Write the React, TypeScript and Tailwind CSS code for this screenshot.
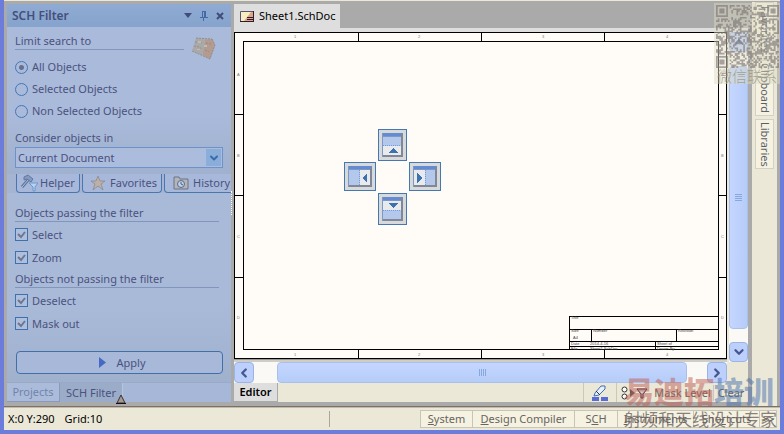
import { useState } from 'react'
import type { ReactNode } from 'react'
import { ChevronDown, ChevronLeft, ChevronRight, ChevronUp } from 'lucide-react'

const FONT = "font-['Noto_Sans','Noto_Sans_CJK_SC',sans-serif]"

function Heading({ children, className = '' }: { children: ReactNode; className?: string }) {
  return <h3 className={`border-b border-[#8296bd] text-[11px] leading-4 ${className}`}>{children}</h3>
}

function Radio({ label, checked, onChange }: { label: string; checked: boolean; onChange: () => void }) {
  return (
    <label className="flex h-[22px] items-center gap-1 text-[11px] leading-4">
      <input
        type="radio"
        name="limit"
        checked={checked}
        onChange={onChange}
        className="size-[13px] shrink-0 appearance-none rounded-full border border-[#4677b3] bg-[#a9badb] checked:bg-[radial-gradient(circle,#66708e_0_2px,#a9badb_3px)]"
      />
      {label}
    </label>
  )
}

function Check({ label }: { label: string }) {
  const [on, setOn] = useState(true)
  return (
    <label className="flex h-[23px] items-center gap-1 text-[11px] leading-4">
      <span className="relative flex size-[13px] shrink-0">
        <input
          type="checkbox"
          checked={on}
          onChange={() => setOn(!on)}
          className="size-full appearance-none border border-[#3f70ac] bg-[#aebfde]"
        />
        {on && (
          <svg viewBox="0 0 13 13" className="pointer-events-none absolute inset-0 size-full">
            <path d="M3 6l3 3 4-5" fill="none" stroke="#6d7690" strokeWidth="2" />
          </svg>
        )}
      </span>
      {label}
    </label>
  )
}

function HelperIcon() {
  return (
    <svg viewBox="0 0 18 18" className="size-[18px]">
      <path d="M2 13l7-8" stroke="#5c7199" strokeWidth="3" />
      <path d="M2 13l7-8" stroke="#b2c8e6" strokeWidth="1" />
      <path d="M4 3l4-2 5 4-2 3-4-3-3 1z" fill="#8299c0" stroke="#6478a0" />
      <path d="M9 9h9l-3 4v4h-2v-4z" fill="#b4d2f2" stroke="#6d97cb" />
    </svg>
  )
}

function StarIcon() {
  return (
    <svg viewBox="0 0 16 16" className="size-4">
      <path d="M8 1l2 5h5l-4 3 2 6-5-4-5 4 2-6-4-3h5z" fill="#bdb0a6" stroke="#8d8a92" strokeWidth=".8" />
    </svg>
  )
}

function HistoryIcon() {
  return (
    <svg viewBox="0 0 16 14" className="h-3.5 w-4">
      <path d="M1 3V1h5l1 2h8v10H1z" fill="#b3b5b6" stroke="#6a7488" />
      <circle cx="8" cy="8" r="3.500" fill="#c0cfe6" stroke="#58698c" />
      <path d="M8 6v2l2 1" stroke="#4e6089" fill="none" />
    </svg>
  )
}

function FilterPanel() {
  const [limit, setLimit] = useState('All Objects')
  return (
    <aside className="flex w-56 shrink-0 flex-col bg-[#a6b7d8] text-[#4b527e]">
      <header className="flex h-[23px] shrink-0 items-center bg-linear-to-b from-[#8fabd3] to-[#86a3cd] pr-1.5 pl-[5px]">
        <h2 className="flex-1 text-xs font-semibold text-[#454f79]">SCH Filter</h2>
        <button aria-label="Menu" className="mr-1.5 flex size-2.5 items-center justify-center">
          <svg viewBox="0 0 8 5" className="w-2"><path d="M0 0h8L4 5z" fill="#414d78" /></svg>
        </button>
        <button aria-label="Pin" className="mr-1.5 flex size-2.5 items-center justify-center">
          <svg viewBox="0 0 8 10" className="h-2.5 w-2" shapeRendering="crispEdges">
            <path d="M2 0h4v1H3v5H2zM4 1h2v5H4zM0 6h8v1H0zM3 7h1v3H3z" fill="#426aa6" />
          </svg>
        </button>
        <button aria-label="Close" className="flex size-2.5 items-center justify-center">
          <svg viewBox="0 0 8 8" className="size-2"><path d="M1 1l6 6M7 1L1 7" stroke="#414d78" strokeWidth="2" /></svg>
        </button>
      </header>

      <div className="flex min-h-0 flex-1 flex-col">
        <section className="bg-linear-to-b from-[#a9bada] from-60% to-[#a0b1cf] px-2">
          <div className="flex h-[29px] justify-between pt-1.5">
            <Heading className="h-[17px] w-[169px]">Limit search to</Heading>
            <svg viewBox="0 0 26 24" className="mt-1 mr-1.5 h-6 w-[26px] shrink-0">
              <path d="M5 1l16 1 3 6-5 14-9-4-9-4z" fill="#aaa9aa" />
              <path d="M14 3l7-1 3 6-5 14-7-4z" fill="#b39b90" />
              <path d="M5 1l16 1M4 5h5l2 1M3 9l5 1 3 2M1 14l9 4 9 4M15 6l5 1M14 13l4 2M21 2l3 6-5 14" fill="none" stroke="#8d8788" strokeWidth=".8" strokeDasharray="2 1" />
              <path d="M7 4h3v2H7zM13 8h3v2h-3zM6 12h3v1H6z" fill="#c3bbae" />
            </svg>
          </div>
          {['All Objects', 'Selected Objects', 'Non Selected Objects'].map((name) => (
            <Radio key={name} label={name} checked={limit === name} onChange={() => setLimit(name)} />
          ))}
          <label htmlFor="scope" className="mt-2 block text-[11px] leading-4">Consider objects in</label>
          <div className="relative mt-px pb-1.5">
            <select
              id="scope"
              className="block h-[21px] w-full appearance-none border border-[#6d92c9] bg-[#abbcdd] pl-0.5 text-[11px] leading-4 outline-none"
            >
              <option>Current Document</option>
            </select>
            <span className="pointer-events-none absolute top-0.5 right-0.5 flex h-[17px] w-[15px] items-center justify-center bg-[#8badda]">
              <ChevronDown className="size-3 text-[#376cad]" strokeWidth={4} />
            </span>
          </div>
        </section>

        <div className="flex h-[19px] shrink-0 gap-0.5 overflow-hidden bg-[#a4b4d2] pl-[9px] text-[11px] leading-4">
          <button className="flex w-16 shrink-0 items-center gap-0.5 rounded-b border border-t-0 border-[#4a76b0] bg-[#a7b8da] pl-[3px]">
            <HelperIcon />Helper
          </button>
          <button className="flex w-20 shrink-0 items-center gap-1 rounded-b border border-t-0 border-[#4a76b0] bg-[#a7b8da] pl-[7px]">
            <StarIcon />Favorites
          </button>
          <button className="flex w-20 shrink-0 items-center gap-1 rounded-b border border-t-0 border-[#4a76b0] bg-[#a7b8da] pl-2">
            <HistoryIcon />History
          </button>
        </div>

        <section className="flex flex-1 flex-col bg-linear-to-b from-[#a9bad9] from-60% to-[#a0b1ce] px-2 pt-3">
          <Heading className="mr-1 h-[17px]">Objects passing the filter</Heading>
          <div className="pt-px">
            <Check label="Select" />
            <Check label="Zoom" />
          </div>
          <Heading className="mt-0.5 mr-1 h-[17px]">Objects not passing the filter</Heading>
          <div className="pt-px">
            <Check label="Deselect" />
            <Check label="Mask out" />
          </div>
          <button className="mt-auto mb-2 ml-px flex h-[23px] items-center justify-center gap-2.5 rounded-sm border border-[#416fa9] bg-[#a7b8d9] pl-1.5 text-[11px] leading-4">
            <svg viewBox="0 0 7 11" className="h-[11px] w-[7px]"><path d="M0 0l7 5.500L0 11z" fill="#4669c4" /></svg>
            Apply
          </button>
        </section>
      </div>

      <nav className="relative flex h-5 shrink-0 border-t border-[#98aac8] text-[11px] leading-4">
        <button className="w-[53px] border-r border-b border-[#8899b9] bg-[#abbcdb] text-[#7184aa]">Projects</button>
        <button className="w-[63px] border-r border-[#b7c5df] bg-[#9bacc9]">SCH Filter</button>
        <svg viewBox="0 0 10 10" className="absolute -bottom-0.5 left-[109px] size-2.5">
          <path d="M5 1l4 8H1z" fill="#ad9789" stroke="#303347" />
          <path d="M0 9.500h10" stroke="#111" />
        </svg>
      </nav>
    </aside>
  )
}

function Sheet() {
  return (
    <svg viewBox="0 0 493 327" preserveAspectRatio="none" className="absolute inset-0 size-full">
      <g fill="#fffcf7" stroke="#000" shapeRendering="crispEdges">
        <path d="M.5.5h492v326H.5z" />
        <path d="M9.500 9.500h475v308H9.500z" />
        <path d="M124.500 0v9M247.500 0v9M370.500 0v9M124.500 318v9M247.500 318v9M370.500 318v9M0 82.500h9M0 163.500h9M0 245.500h9M485 82.500h8M485 163.500h8M485 245.500h8" />
        <path d="M335.500 318v-34h149M335 297.500h149M335 309.500h149M335 314.500h149M357.500 297v12M442.500 297v12M421.500 309v9" fill="none" />
      </g>
      <g className="font-['Liberation_Sans',sans-serif]" fontSize="4" fill="#777">
        {['1', '2', '3', '4'].map((n, i) => (
          <g key={n}>
            <text x={60 + i * 124} y="6">{n}</text>
            <text x={60 + i * 124} y="324">{n}</text>
          </g>
        ))}
        {['A', 'B', 'C', 'D'].map((n, i) => (
          <g key={n}>
            <text x="3" y={44 + i * 81}>{n}</text>
            <text x="487" y={44 + i * 81}>{n}</text>
          </g>
        ))}
        <g fill="#444">
          <text x="337" y="287">Title</text>
          <text x="337" y="300">Size</text>
          <text x="339" y="307">A4</text>
          <text x="359" y="300">Number</text>
          <text x="444" y="300">Revision</text>
          <text x="337" y="313">Date</text>
          <text x="356" y="313">2014-4-16</text>
          <text x="423" y="313">Sheet of</text>
          <text x="337" y="318">File</text>
          <text x="356" y="318">Sheet1.SchDoc</text>
          <text x="423" y="318">Drawn By:</text>
        </g>
      </g>
    </svg>
  )
}

const DOCK_SHAPES = {
  top: { pane: 'M1 13h20v9H1z', line: 'M1 12.500h20', arrow: 'M6 20h10l-5-5z' },
  bottom: { pane: 'M1 4h20v9H1z', line: 'M1 13.500h20', arrow: 'M6 6h10l-5 5z' },
  left: { pane: 'M12 4h11v16H12z', line: 'M11.500 4v16', arrow: 'M19 7v10l-5-5z' },
  right: { pane: 'M1 4h11v16H1z', line: 'M12.500 4v16', arrow: 'M4 7v10l5-5z' },
}

function DockButton({ side }: { side: keyof typeof DOCK_SHAPES }) {
  const wide = side === 'left' || side === 'right'
  const w = wide ? 24 : 21
  const h = wide ? 21 : 24
  const shape = DOCK_SHAPES[side]
  return (
    <button
      aria-label={`Dock ${side}`}
      className={`flex shrink-0 items-center justify-center border border-[#4478b4] bg-[#d8dad9] ${wide ? 'h-[29px] w-8' : 'h-8 w-[29px]'}`}
    >
      <svg width={w} height={h} viewBox={`0 0 ${w} ${h}`} shapeRendering="crispEdges">
        <path d={`M0 0h${w}v${h}H0z`} fill="#b4c8ec" />
        <path d={shape.pane} fill="#e8eaeb" />
        <path d={shape.line} stroke="#6d9de0" strokeDasharray="1 1" />
        <path d={shape.arrow} fill="#3c71b2" />
        <path d={`M0 0h${w}v4H0z`} fill="#648bd1" />
        <path d={`M0 3.500h${w}M.5 0v${h}`} stroke="#7b98c6" />
        <path d={`M${w - 1} 1v${h - 2}H1`} stroke="#7f8798" strokeWidth="2" fill="none" />
      </svg>
    </button>
  )
}

const scrollButton = 'flex shrink-0 items-center justify-center rounded-sm border border-[#9bb4e6] bg-[#bdd0fb] text-[#43588f]'

function DocumentArea() {
  return (
    <main className="flex min-w-0 flex-1 flex-col bg-[#ebe8d8]">
      <div className="flex h-7 shrink-0 flex-col bg-[#aaaaaa]">
        <div className="flex h-6 items-stretch">
          <button className="flex w-[106px] items-center gap-[5px] bg-[#dedede] pl-1.5 text-[11px] text-black">
            <svg viewBox="0 0 14 11" className="h-[11px] w-3.5">
              <path d="M.5.5h13v10H.5z" fill="#f6eec0" stroke="#565470" />
              <path d="M4 10L11 1h2v9z" fill="#dba58a" />
              <path d="M7 6.500h6M7 8.500h6M0 10.500h14M13.500 0v11" stroke="#35192c" />
            </svg>
            Sheet1.SchDoc
          </button>
        </div>
        <div className="flex-1 bg-[#dedede]" />
      </div>

      <div className="flex min-h-0 flex-1">
        <div className="flex min-w-0 flex-1 flex-col">
          <div className="relative flex-1 bg-[#fffcf7]">
            <Sheet />
            <div className="absolute top-[97px] left-[110px] flex flex-col items-center">
              <DockButton side="top" />
              <div className="mt-px mb-0.5 flex gap-[33px]">
                <DockButton side="left" />
                <DockButton side="right" />
              </div>
              <DockButton side="bottom" />
            </div>
          </div>
          <div className="h-[3px] border-t border-[#999] bg-[#cfcdc4]" />
        </div>
        <div className="ml-0.5 flex w-[19px] shrink-0 flex-col bg-[#fbf9f5]">
          <button aria-label="Scroll up" className={`${scrollButton} h-5`}>
            <ChevronUp className="size-3.5" strokeWidth={4} />
          </button>
          <div className="mt-3.5 flex h-[263px] flex-col items-center justify-center gap-px rounded-sm border border-[#a9c0ef] bg-linear-to-r from-[#c5d6ff] to-[#b5cdf8]">
            {[0, 1, 2, 3].map((i) => (
              <i key={i} className="h-px w-[7px] bg-[#87a8dc]" />
            ))}
          </div>
          <button aria-label="Scroll down" className={`${scrollButton} mt-auto h-5`}>
            <ChevronDown className="size-3.5" strokeWidth={4} />
          </button>
        </div>
      </div>

      <div className="mr-[21px] flex h-[21px] shrink-0 bg-[#fbf9f5]">
        <button aria-label="Scroll left" className={`${scrollButton} w-5`}>
          <ChevronLeft className="size-3.5" strokeWidth={4} />
        </button>
        <div className="mr-5 ml-[23px] flex flex-1 items-center justify-center gap-px rounded-sm border border-[#a9c0ef] bg-linear-to-b from-[#c5d6ff] to-[#b5cdf8]">
          {[0, 1, 2, 3].map((i) => (
            <i key={i} className="h-[7px] w-px bg-[#87a8dc]" />
          ))}
        </div>
        <button aria-label="Scroll right" className={`${scrollButton} w-5`}>
          <ChevronRight className="size-3.5" strokeWidth={4} />
        </button>
      </div>

      <div className="flex h-[19px] shrink-0 items-stretch justify-between text-[11px] leading-4">
        <button className="w-11 border-r border-b border-[#aaa] bg-[#dedede] font-semibold text-black">Editor</button>
        <div className="flex items-center text-[#68645d]">
          <button aria-label="Highlight" className="flex h-full w-[34px] items-center justify-center border-x border-[#cbc8ba]">
            <svg viewBox="0 0 17 16" className="h-4 w-[17px]">
              <path d="M3 8l6-7h4v3l-6 6-5 1z" fill="#e6f0fb" stroke="#456cae" />
              <path d="M4 6l4 4" stroke="#303347" />
              <path d="M0 12h7v4H0zM9 12h7v4H9z" fill="#596bd5" />
            </svg>
          </button>
          <button aria-label="Filter" className="flex w-[35px] items-center justify-center">
            <svg viewBox="0 0 27 14" className="h-3.5 w-[27px]">
              <g fill="#fff" stroke="#333"><circle cx="3.500" cy="3.500" r="2.500" /><circle cx="3.500" cy="10.500" r="2.500" /></g>
              <path d="M9 3l5 4-5 4z" fill="#555" />
              <path d="M16 3h10l-4 5v4h-2V8z" fill="#d8d0cf" stroke="#292433" />
            </svg>
          </button>
          <button className="w-[62px] border-r border-[#cbc8ba]">Mask Level</button>
          <button className="w-[34px]">Clear</button>
        </div>
      </div>
    </main>
  )
}

// finder patterns in three corners, scattered modules elsewhere
function buildQr() {
  const n = 37
  let seed = 37
  let d = ''
  for (let y = 0; y < n; y++) {
    for (let x = 0; x < n; x++) {
      seed = (seed * 1103515 + 12345) % 2147483647
      const cx = x > 28 ? x - 30 : x
      const cy = y > 28 ? y - 30 : y
      const corner = (x < 8 || x > 28) && (y < 8 || y > 28) && !(x > 28 && y > 28)
      let on = seed / 2147483647 > 0.5
      if (corner) {
        const r = Math.max(Math.abs(cx - 3), Math.abs(cy - 3))
        on = r === 3 || r < 2
      }
      if (on) d += `M${x} ${y}h1v1h-1z`
    }
  }
  return d
}

const QR_PATH = buildQr()

function Watermarks() {
  return (
    <>
      <div className="pointer-events-none absolute top-[3px] right-0 w-[66px] bg-[#dcdcc0]/45 pt-0.5">
        <svg viewBox="0 0 37 37" className="mx-auto size-[63px]">
          <path d={QR_PATH} fill="#807778" fillOpacity="0.65" />
        </svg>
        <p className="text-center text-[15px] leading-4 font-light whitespace-nowrap text-[#969087]/80">微信联系</p>
      </div>
      <div className="pointer-events-none absolute right-1 bottom-0 w-[152px] whitespace-nowrap">
        <p className="text-[30px] leading-9 font-black text-[#bd5d54]/50">
          易迪拓<span className="text-[#4a70ad]/50">培训</span>
        </p>
        <p className="text-[17px] leading-5 text-[#655b5b]/75">射频和天线设计专家</p>
      </div>
    </>
  )
}

const STATUS_BUTTONS = [
  { pre: '', key: 'S', post: 'ystem', width: 'w-[52px]' },
  { pre: '', key: 'D', post: 'esign Compiler', width: 'w-[102px]' },
  { pre: 'S', key: 'C', post: 'H', width: 'w-[43px]' },
  { pre: '', key: 'I', post: 'nstruments', width: 'w-[76px]' },
  { pre: 'Sho', key: 'r', post: 'tcuts', width: 'w-[66px]' },
  { pre: '>>', key: '', post: '', width: 'w-[17px]' },
]

export default function App() {
  return (
    <div className={`relative flex h-screen flex-col overflow-hidden border-r-4 border-b-4 border-l-4 border-[#6c7cda] bg-[#ebe8d8] ${FONT}`}>
      <div className="mt-px flex min-h-0 flex-1 border-b border-[#807064] bg-[#aaaaaa] pt-[3px] pr-[3px] pb-1 pl-[3px]">
        <FilterPanel />
        <div className="flex w-[3px] shrink-0 items-center">
          <i className="h-6 w-px border-l border-dotted border-white" />
        </div>
        <DocumentArea />
        <nav className="-mt-0.5 -mb-1 ml-1 flex w-[25px] shrink-0 flex-col gap-[3px] bg-[#ebe8d8] px-[3px] text-[11px] leading-4 text-[#5c5d69]">
          <button className="flex h-[55px] items-center justify-center border border-[#d3d1c6] bg-[#f5f2e2] [writing-mode:vertical-rl]">Favorites</button>
          <button className="flex h-[56px] items-center justify-center border border-[#d3d1c6] bg-[#f5f2e2] [writing-mode:vertical-rl]">Clipboard</button>
          <button className="flex h-[50px] items-center justify-center border border-[#d3d1c6] bg-[#f5f2e2] [writing-mode:vertical-rl]">Libraries</button>
        </nav>
      </div>

      <footer className="flex h-[23px] shrink-0 items-center border-t border-[#bebbb0] text-[11px] leading-4">
        <span className="ml-1">X:0 Y:290</span>
        <span className="ml-2.5">Grid:10</span>
        <i className="ml-auto h-4 border-r border-[#aaa69a]" />
        <div className="mr-[3px] ml-[90px] flex h-[18px] border-l border-[#c8c5b8] text-[#69645f]">
          {STATUS_BUTTONS.map((b) => (
            <button key={b.key + b.pre} className={`${b.width} shrink-0 border-y border-r border-[#c8c5b8] bg-[#f5f2e1]`}>
              {b.pre}
              <u>{b.key}</u>
              {b.post}
            </button>
          ))}
        </div>
      </footer>
      <Watermarks />
    </div>
  )
}
